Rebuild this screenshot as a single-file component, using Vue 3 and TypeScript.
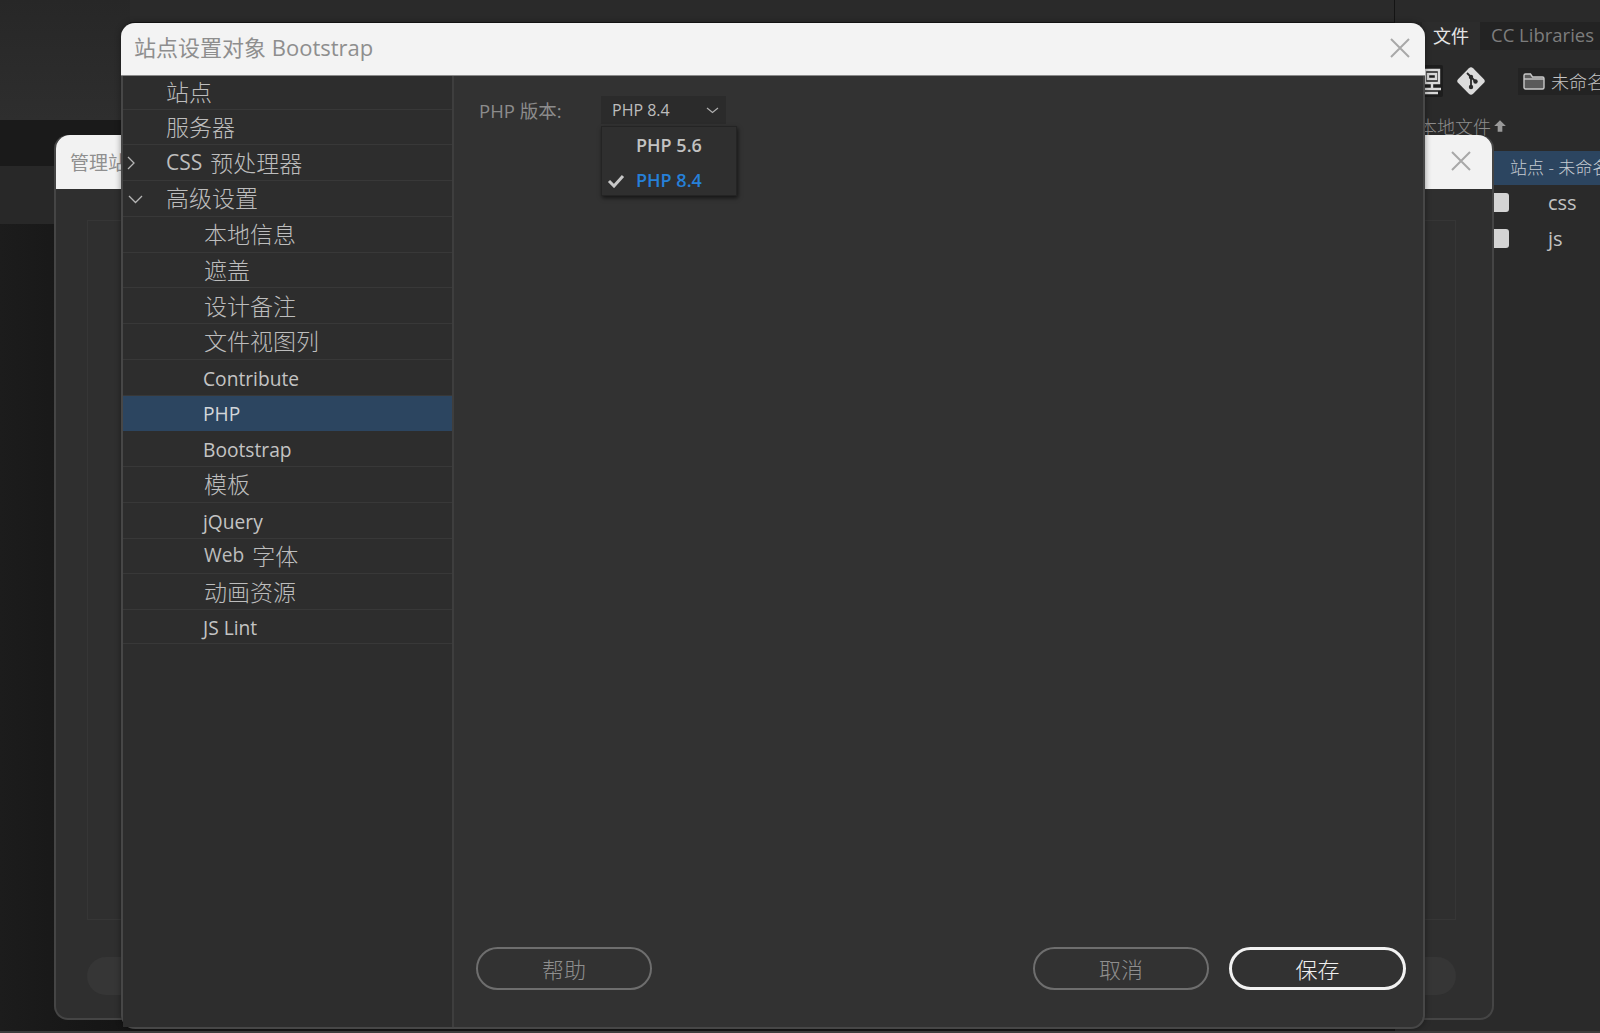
<script setup lang="ts">
interface NavRow {
  label: string;
  prefix?: string;
  latin?: boolean;
  sub?: boolean;
  active?: boolean;
  arrow?: 'right' | 'down';
}

const rows: NavRow[] = [
  { label: '站点' },
  { label: '服务器' },
  { label: '预处理器', prefix: 'CSS', arrow: 'right' },
  { label: '高级设置', arrow: 'down' },
  { label: '本地信息', sub: true },
  { label: '遮盖', sub: true },
  { label: '设计备注', sub: true },
  { label: '文件视图列', sub: true },
  { label: 'Contribute', sub: true, latin: true },
  { label: 'PHP', sub: true, active: true, latin: true },
  { label: 'Bootstrap', sub: true, latin: true },
  { label: '模板', sub: true },
  { label: 'jQuery', sub: true, latin: true },
  { label: '字体', prefix: 'Web', sub: true },
  { label: '动画资源', sub: true },
  { label: 'JS Lint', sub: true, latin: true },
];
</script>

<template>
  <div class="desktop">
    <!-- app behind the dialogs -->
    <div class="app-left">
      <div class="band-a"></div>
      <div class="band-b"></div>
      <div class="band-c"></div>
      <div class="band-d"></div>
    </div>
    <div class="top-line"></div>

    <div class="files-panel">
      <div class="tabs">
        <span class="tab tab-on">文件</span>
        <span class="tab tab-off">CC Libraries</span>
      </div>
      <div class="tools">
        <svg class="tool-pc" width="24" height="32" viewBox="0 0 24 32">
          <rect x="0" y="0" width="22" height="32" rx="2" fill="#1d1d1d" />
          <path d="M4 5h14v13H4zM7 9h8v5H7zM11 18v5M3 24h17M3 28h14" fill="none" stroke="#d8d8d8" stroke-width="2.4" />
        </svg>
        <svg class="tool-git" width="32" height="32" viewBox="0 0 32 32">
          <rect x="5.5" y="5.500" width="21" height="21" rx="3" transform="rotate(45 16 16)" fill="#dcdcdc" />
          <path d="M12 8l8 8M16 12v10" fill="none" stroke="#2a2a2a" stroke-width="1.8" />
          <circle cx="16" cy="12" r="2.2" fill="#2a2a2a" />
          <circle cx="16" cy="22" r="2.2" fill="#2a2a2a" />
          <circle cx="20.5" cy="16.500" r="2.2" fill="#2a2a2a" />
        </svg>
        <div class="site-select">
          <svg class="folder" width="22" height="19" viewBox="0 0 22 19">
            <path d="M1 3.5a1.5 1.5 0 0 1 1.500-1.500h5l2 3h10a1.500 1.500 0 0 1 1.500 1.500v9a1.500 1.500 0 0 1-1.500 1.500h-17a1.500 1.500 0 0 1-1.500-1.500z" fill="#5a5a5a" stroke="#c8c8c8" stroke-width="1.400" />
            <path d="M1 7h20" stroke="#c8c8c8" stroke-width="1.400" />
          </svg>
          <span>未命名站点</span>
        </div>
      </div>
      <div class="local-head">
        <span>本地文件</span>
        <svg width="14" height="14" viewBox="0 0 12 12"><path d="M6 1l5 5H8v5H4V6H1z" fill="#9a9a9a" /></svg>
      </div>
      <div class="site-row">站点 - 未命名站点</div>
      <div class="file-row">
        <span class="file-folder"></span><span class="file-name">css</span>
      </div>
      <div class="file-row">
        <span class="file-folder"></span><span class="file-name">js</span>
      </div>
    </div>

    <!-- manage sites dialog, mostly hidden -->
    <div class="dialog-back">
      <div class="back-head">
        <span>管理站点</span>
        <svg class="close-x" width="22" height="22" viewBox="0 0 22 22"><path d="M2 2l18 18M20 2L2 20" stroke="#a8a8a8" stroke-width="2" /></svg>
      </div>
      <div class="back-body">
        <div class="back-inner"></div>
        <div class="back-buttons">
          <span class="back-pill"></span>
          <span class="back-pill"></span>
        </div>
      </div>
    </div>

    <!-- main dialog -->
    <div class="dialog">
      <div class="dialog-head">
        <span class="head-title">站点设置对象 Bootstrap</span>
        <svg class="close-x" width="22" height="22" viewBox="0 0 22 22"><path d="M2 2l18 18M20 2L2 20" stroke="#a8a8a8" stroke-width="2" /></svg>
      </div>
      <div class="dialog-body">
        <nav class="nav">
          <div
            v-for="row in rows"
            :key="row.label"
            class="nav-row"
            :class="{ 'nav-sub': row.sub, 'nav-active': row.active, 'nav-latin': row.latin }"
          >
            <svg v-if="row.arrow === 'right'" class="arrow-right" width="9" height="14" viewBox="0 0 9 14"><path d="M1 1l6 6-6 6" fill="none" stroke="#b5b5b5" stroke-width="1.300" /></svg>
            <svg v-if="row.arrow === 'down'" class="arrow-down" width="15" height="9" viewBox="0 0 15 9"><path d="M1 1l6.500 6.500L14 1" fill="none" stroke="#b5b5b5" stroke-width="1.300" /></svg>
            <span v-if="row.prefix" class="nav-prefix">{{ row.prefix }}</span>
            <span>{{ row.label }}</span>
          </div>
        </nav>
        <section class="pane">
          <div class="field">
            <span class="field-label">PHP 版本:</span>
            <div class="select">
              <span>PHP 8.4</span>
              <svg width="13" height="7" viewBox="0 0 13 7"><path d="M1 1l5.500 4.500L12 1" fill="none" stroke="#b0b0b0" stroke-width="1.200" /></svg>
            </div>
            <div class="menu">
              <div class="menu-item">PHP 5.6</div>
              <div class="menu-item menu-on">
                <svg class="check" width="18" height="14" viewBox="0 0 18 14"><path d="M2 7l5 5 9-10" fill="none" stroke="#c8c8c8" stroke-width="3" /></svg>
                PHP 8.4
              </div>
            </div>
          </div>
          <div class="actions">
            <button class="pill">帮助</button>
            <span class="spacer"></span>
            <button class="pill">取消</button>
            <button class="pill pill-main">保存</button>
          </div>
        </section>
      </div>
    </div>
    <div class="bottom-line"></div>
  </div>
</template>

<style>
html,
body {
  margin: 0;
  background: #161616;
}
</style>

<style scoped>
.desktop {
  position: relative;
  width: 1600px;
  height: 1033px;
  overflow: hidden;
  background: #161616;
  font-family: "Open Sans", "Noto Sans CJK SC", sans-serif;
}

.app-left {
  position: absolute;
  left: 0;
  top: 0;
  width: 130px;
  height: 100%;
  display: flex;
  flex-direction: column;
}

.band-a {
  height: 120px;
  background: linear-gradient(#272727, #2e2e2e);
}

.band-b {
  height: 46px;
  background: #1a1a1a;
}

.band-c {
  height: 58px;
  background: #282828;
}

.band-d {
  flex: 1;
  background: linear-gradient(90deg, #1c1c1c, #141414);
}

.top-line {
  position: absolute;
  left: 130px;
  right: 0;
  top: 0;
  height: 22px;
  background: #2a2a2a;
}

.files-panel {
  position: absolute;
  left: 1394px;
  right: 0;
  top: 0;
  height: 100%;
  border-left: 1px solid #141414;
  background: #2a2a2a;
  padding-top: 22px;
  box-sizing: border-box;
  overflow: hidden;
}

.tabs {
  display: flex;
  height: 28px;
  padding-left: 27px;
  background: #262626;
  white-space: nowrap;
}

.tab {
  display: flex;
  align-items: center;
  padding: 0 11px 3px;
  font-size: 18px;
}

.tab-on {
  color: #e4e4e4;
  background: #2c2c2c;
}

.tab-off {
  flex: 1;
  color: #7d7d7d;
  background: #232323;
  padding-right: 0;
  font-size: 18.500px;
}

.tools {
  display: flex;
  align-items: center;
  height: 32px;
  margin-top: 15px;
  padding-left: 26px;
}

.tool-pc {
  margin-right: 10px;
}

.site-select {
  display: flex;
  align-items: center;
  gap: 6px;
  margin-left: 31px;
  height: 27px;
  padding-left: 5px;
  background: #232323;
  color: #c4c4c4;
  font-size: 18px;
  font-weight: 300;
  white-space: nowrap;
  overflow: hidden;
  flex: 1;
}

.folder {
  flex: none;
}

.local-head {
  display: flex;
  align-items: center;
  gap: 2px;
  margin-top: 18px;
  height: 22px;
  padding-left: 24px;
  color: #8c8c8c;
  font-size: 18px;
  font-weight: 300;
}

.site-row {
  height: 34px;
  margin-left: 98px;
  margin-top: 14px;
  margin-bottom: -1px;
  padding-left: 17px;
  line-height: 34px;
  background: #2c4560;
  color: #c6ccd2;
  font-size: 17px;
  font-weight: 300;
  white-space: nowrap;
  overflow: hidden;
}

.file-row {
  display: flex;
  align-items: center;
  height: 36px;
  padding-left: 90px;
}

.file-folder {
  width: 24px;
  height: 19px;
  flex: none;
  border-radius: 3px;
  background: #d4d4d4;
}

.file-name {
  margin-left: 39px;
  color: #c2c2c2;
  font-size: 20px;
  font-weight: 500;
}

.dialog-back {
  position: absolute;
  left: 54px;
  top: 135px;
  width: 1440px;
  height: 885px;
  display: flex;
  flex-direction: column;
  box-sizing: border-box;
  border: 2px solid #454545;
  border-top: none;
  border-radius: 14px;
  background: #2f2f2f;
}

.back-head {
  height: 54px;
  flex: none;
  display: flex;
  align-items: center;
  justify-content: space-between;
  padding: 0 20px 0 14px;
  background: #f2f2f2;
  border-radius: 14px 14px 0 0;
  color: #8f8f8f;
  font-size: 19px;
}

.back-body {
  flex: 1;
  display: flex;
  flex-direction: column;
  padding: 31px 36px 23px 31px;
}

.back-inner {
  height: 700px;
  border: 1px solid #363636;
  box-sizing: border-box;
}

.back-buttons {
  display: flex;
  justify-content: space-between;
  margin-top: 37px;
}

.back-pill {
  width: 70px;
  height: 38px;
  border-radius: 19px;
  background: #363636;
}

.dialog {
  position: absolute;
  left: 121px;
  top: 23px;
  width: 1304px;
  height: 1006px;
  display: flex;
  flex-direction: column;
  box-sizing: border-box;
  border: 2px solid #474747;
  border-top: none;
  border-radius: 14px;
  background: #323232;
  box-shadow: 0 0 6px rgba(0, 0, 0, 0.4);
}

.dialog-head {
  height: 53px;
  flex: none;
  display: flex;
  align-items: center;
  justify-content: space-between;
  margin: 0 -2px;
  padding: 0 14px 0 13px;
  background: #f3f3f3;
  border-radius: 14px 14px 0 0;
  color: #8e8e8e;
  font-size: 22px;
  border-bottom: 1px solid #8a8a8a;
  box-sizing: border-box;
}

.head-title {
  margin-top: -7px;
}

.close-x {
  flex: none;
  margin-top: -2px;
}

.dialog-body {
  flex: 1;
  display: flex;
  min-height: 0;
}

.nav {
  width: 331px;
  flex: none;
  background: #2d2d2d;
  border-right: 2px solid #3e3e3e;
  box-sizing: border-box;
}

.nav-row {
  position: relative;
  height: 35.750px;
  box-sizing: border-box;
  display: flex;
  align-items: center;
  gap: 8px;
  padding-left: 43px;
  padding-bottom: 2px;
  border-bottom: 1px solid #383838;
  color: #bdbdbd;
  font-size: 23px;
  font-weight: 300;
}

.nav-row:first-child {
  height: 33.500px;
}

.nav-row:last-child {
  height: 34px;
}

.nav-sub {
  padding-left: 81px;
}

.nav-latin {
  padding-left: 80px;
  padding-bottom: 0;
  padding-top: 2px;
  font-size: 19.200px;
  font-weight: 400;
  color: #c4c4c4;
}

.nav-prefix {
  font-size: 19.200px;
  font-weight: 400;
}

.nav-row:not(.nav-sub) .nav-prefix {
  font-size: 21px;
}

.nav-active {
  background: #2c4560;
  color: #d2d6da;
  border-bottom-color: #2c4560;
}

.arrow-right {
  position: absolute;
  left: 4px;
  top: 11px;
}

.arrow-down {
  position: absolute;
  left: 5px;
  top: 14px;
}

.pane {
  flex: 1;
  display: flex;
  flex-direction: column;
  justify-content: space-between;
  padding: 20px 17px 37px 22px;
  box-sizing: border-box;
}

.field {
  position: relative;
  display: flex;
  align-items: center;
  padding-left: 3px;
  height: 28px;
}

.field-label {
  width: 122px;
  color: #8c8c8c;
  font-size: 18.500px;
}

.select {
  width: 125px;
  height: 28px;
  box-sizing: border-box;
  display: flex;
  align-items: center;
  justify-content: space-between;
  padding: 0 7px 0 11px;
  background: #2b2b2b;
  color: #bdbdbd;
  font-size: 16px;
}

.menu {
  position: absolute;
  left: 125px;
  top: 30px;
  width: 136px;
  height: 70px;
  box-sizing: border-box;
  padding-top: 2px;
  background: #2f2f2f;
  border: 1px solid #242424;
  box-shadow: 1px 2px 4px rgba(0, 0, 0, 0.6);
}

.menu-item {
  position: relative;
  height: 35px;
  line-height: 33px;
  padding-left: 34px;
  color: #c2c2c2;
  font-size: 18px;
  font-weight: 600;
}

.menu-on {
  color: #2680d8;
}

.check {
  position: absolute;
  left: 5px;
  top: 10px;
}

.actions {
  display: flex;
  align-items: center;
  gap: 20px;
}

.spacer {
  flex: 1;
}

.pill {
  width: 176px;
  height: 43px;
  border: 2px solid #6e6e6e;
  border-radius: 22px;
  background: transparent;
  color: #8e8e8e;
  font-family: inherit;
  font-size: 22px;
  font-weight: 300;
  padding: 0 0 2px;
}

.pill-main {
  width: 177px;
  border: 3px solid #f2f2f2;
  color: #f0f0f0;
}

.bottom-line {
  position: absolute;
  left: 0;
  right: 0;
  bottom: 0;
  height: 2px;
  background: #3c3c3c;
}
</style>
